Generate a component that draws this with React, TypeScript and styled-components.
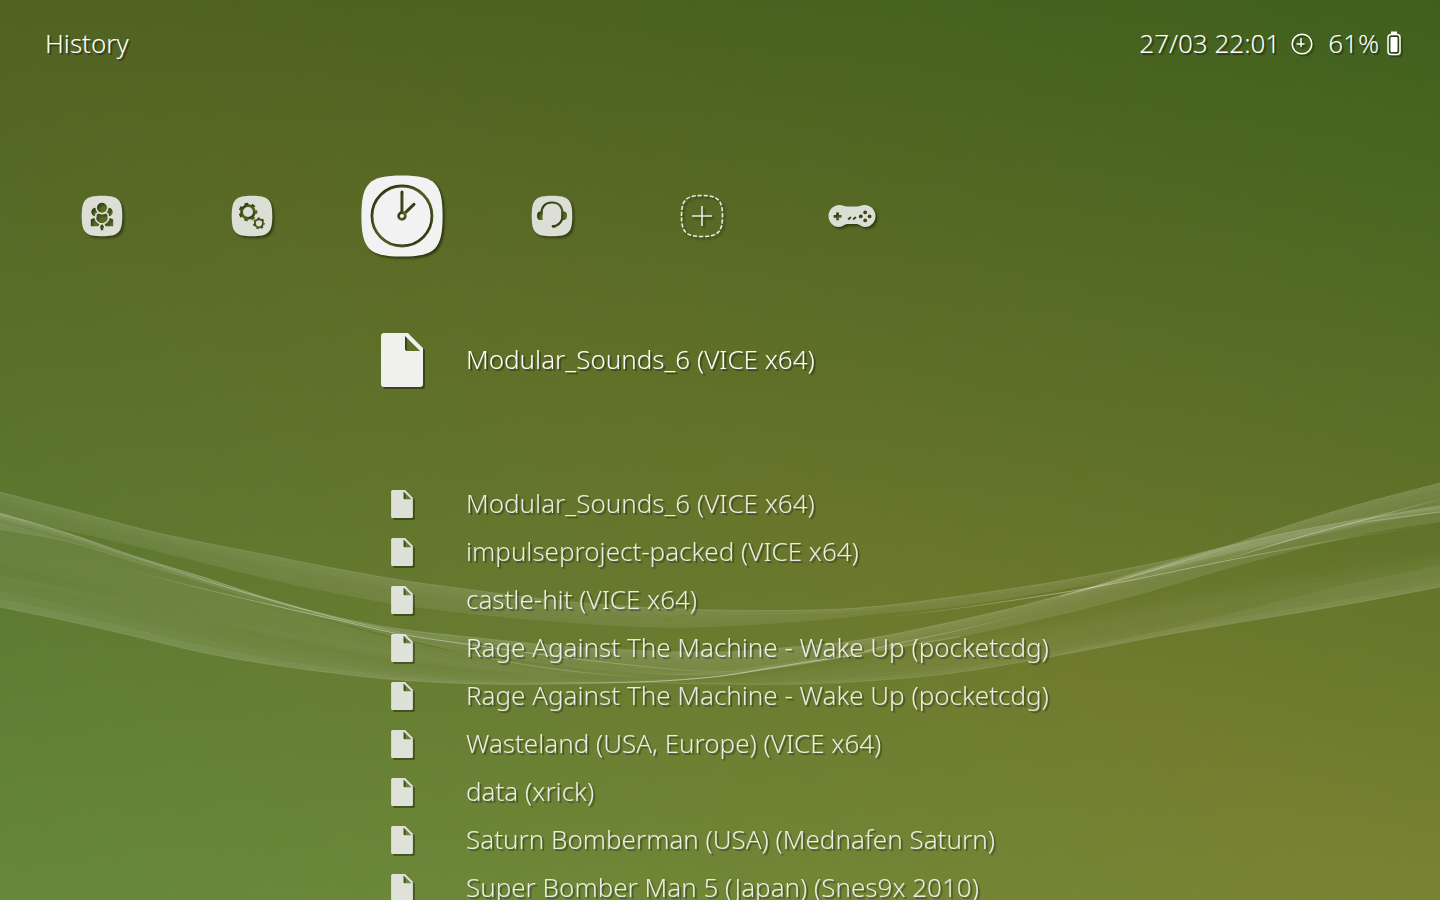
import React, { useState } from "react";
import styled, { createGlobalStyle, css } from "styled-components";

const GlobalStyle = createGlobalStyle`
  *, *::before, *::after { box-sizing: border-box; }
  body {
    margin: 0;
    font-family: "Noto Sans", "Open Sans", sans-serif;
    font-size: 26px;
    font-weight: 300;
    line-height: 46px;
    color: #fff;
    background: #5f7429;
  }
`;

const Screen = styled.div`
  position: relative;
  height: 100vh;
  overflow: hidden;
  background:
    linear-gradient(to bottom right, rgba(0, 36, 0, 0.34), rgba(0, 36, 0, 0)),
    linear-gradient(to top right, rgb(122, 157, 70), rgb(122, 131, 50) 50%, rgb(76, 108, 35));
`;

const Backdrop = styled.svg`
  position: absolute;
  inset: 0;
  width: 100%;
  height: 100%;
`;

const Content = styled.div`
  position: relative;
`;

const Header = styled.header`
  display: flex;
  justify-content: space-between;
  align-items: center;
  padding: 20px 39px 2px 45px;
  text-shadow: 2px 2px 1px rgba(0, 0, 0, 0.4);
`;

const Title = styled.h1`
  margin: 0;
  font-size: inherit;
  font-weight: inherit;
`;

const Status = styled.div`
  display: flex;
  align-items: center;
  gap: 8px;
`;

const StatusIcon = styled.svg<{ $width: number }>`
  width: ${(p) => p.$width}px;
  height: 24px;
  overflow: visible;
  filter: drop-shadow(2px 2px 0 rgba(0, 0, 0, 0.3));
`;

const Clock = styled.span`
  display: flex;
  align-items: center;
  gap: 10px;
  margin-right: 6px;
`;

const resetButton = css`
  border: 0;
  padding: 0;
  background: none;
  color: inherit;
  font: inherit;
  text-align: left;
  cursor: pointer;
`;

const Categories = styled.nav`
  display: flex;
  padding: 84px 0 0 27px;
`;

const Category = styled.button`
  ${resetButton}
  width: 150px;
  height: 128px;
  display: grid;
  place-items: center;
`;

const CategoryIcon = styled.svg<{ $active: boolean }>`
  width: ${(p) => (p.$active ? 128 : 64)}px;
  height: ${(p) => (p.$active ? 128 : 64)}px;
  overflow: visible;
  opacity: ${(p) => (p.$active ? 1 : 0.86)};
  filter: drop-shadow(2px 2px 1px rgba(0, 0, 0, 0.5));
`;

const List = styled.ul`
  list-style: none;
  margin: 0;
  padding: 56px 0 0 366px;
`;

const Row = styled.li<{ $active: boolean }>`
  margin-bottom: ${(p) => (p.$active ? 96 : 0)}px;
`;

const Entry = styled.button<{ $active: boolean }>`
  ${resetButton}
  display: grid;
  grid-template: 48px / 72px auto;
  column-gap: 28px;
  align-items: center;
  white-space: nowrap;
  opacity: ${(p) => (p.$active ? 0.99 : 0.86)};
  text-shadow: 2px 2px 1px rgba(0, 0, 0, 0.4);
`;

const EntryLabel = styled.span`
  align-self: start;
`;

const FileIcon = styled.svg<{ $active: boolean }>`
  justify-self: center;
  width: ${(p) => (p.$active ? 42 : 22)}px;
  height: ${(p) => (p.$active ? 54 : 28)}px;
  overflow: visible;
  filter: drop-shadow(2px 2px 0 rgba(0, 0, 0, 0.4));
`;

type Point = [number, number];

/** Smooth cubic segments through every point, the first one excluded. */
function segments(p: Point[]): string {
  let d = "";
  for (let i = 0; i < p.length - 1; i++) {
    const a = p[i - 1] ?? p[i];
    const b = p[i];
    const c = p[i + 1];
    const e = p[i + 2] ?? c;
    d += `C${b[0] + (c[0] - a[0]) / 6} ${b[1] + (c[1] - a[1]) / 6} ${c[0] - (e[0] - b[0]) / 6} ${c[1] - (e[1] - b[1]) / 6} ${c[0]} ${c[1]}`;
  }
  return d;
}

const curve = (p: Point[]) => `M${p[0][0]} ${p[0][1]}${segments(p)}`;

function area(top: Point[], bottom: Point[]): string {
  const back = [...bottom].reverse();
  return `${curve(top)}L${back[0][0]} ${back[0][1]}${segments(back)}Z`;
}

/** Height of a point list at x. */
function at(p: Point[], x: number): number {
  for (let i = 0; i < p.length - 1; i++) {
    if (x <= p[i + 1][0]) {
      const t = (x - p[i][0]) / (p[i + 1][0] - p[i][0]);
      return p[i][1] + t * (p[i + 1][1] - p[i][1]);
    }
  }
  return p[p.length - 1][1];
}

interface RibbonProps {
  top: Point[];
  bottom: Point[];
  shades: number[];
}

/** A translucent band whose opacity runs through the shades from top to bottom. */
function Ribbon({ top, bottom, shades }: RibbonProps) {
  const mix = (t: number): Point[] =>
    top.map(([x, y]) => [x, y + (at(bottom, x) - y) * t]);
  return (
    <>
      {shades.map((alpha, i) => (
        <path
          key={i}
          d={area(mix(i / shades.length), mix((i + 1) / shades.length))}
          fill="#fff"
          fillOpacity={alpha}
        />
      ))}
    </>
  );
}

const crest: Point[] = [
  [0, 492], [100, 518], [167, 535], [267, 555], [333, 568], [400, 580], [480, 591], [560, 601],
  [640, 607], [713, 610], [813, 610], [880, 606], [960, 596], [1060, 581], [1160, 562],
  [1220, 548], [1290, 532], [1380, 516], [1440, 506],
];
const crestUnder: Point[] = [
  [0, 516], [100, 538], [200, 562], [300, 587], [400, 605], [480, 615], [560, 622], [640, 627],
  [713, 627], [800, 622], [880, 614], [960, 606], [1060, 590], [1160, 570], [1220, 556],
  [1290, 541], [1380, 522], [1440, 512],
];
const middle: Point[] = [
  [0, 513], [67, 533], [133, 556], [200, 576], [267, 598], [333, 616], [400, 629], [480, 638],
  [560, 646], [650, 651], [720, 652], [780, 648], [860, 640], [960, 620], [1060, 596],
  [1127, 576], [1193, 556], [1227, 546], [1293, 524], [1360, 504], [1440, 483],
];
const middleUnder: Point[] = [
  [0, 530], [67, 542], [133, 562], [200, 582], [267, 603], [333, 621], [400, 638], [480, 654],
  [560, 666], [650, 674], [720, 675], [780, 668], [860, 655], [960, 637], [1060, 615],
  [1127, 598], [1193, 579], [1227, 569], [1293, 551], [1360, 535], [1440, 522],
];
const base: Point[] = [
  [0, 607], [67, 621], [133, 636], [200, 652], [267, 664], [333, 673], [400, 680], [480, 684],
  [560, 684], [640, 682], [713, 677], [770, 669], [813, 662], [860, 653], [960, 637],
];
const baseTop: Point[] = [
  [0, 522], [67, 540], [133, 560], [200, 580], [267, 602], [333, 622], [400, 640], [480, 656],
  [560, 666], [640, 673], [713, 672], [770, 665], [813, 658], [860, 650], [960, 636],
];
const tail: Point[] = [
  [640, 682], [713, 684], [800, 684], [880, 680], [960, 672], [1060, 655], [1160, 636],
  [1200, 629], [1290, 614], [1360, 602], [1440, 587],
];
const tailTop: Point[] = [
  [640, 681], [713, 677], [800, 664], [880, 650], [960, 636], [1060, 614], [1160, 592],
  [1200, 584], [1290, 570], [1360, 560], [1440, 548],
];
const tailFold: Point[] = [
  [1060, 653], [1160, 631], [1240, 611], [1340, 586], [1440, 565],
];
const tailFoldUnder: Point[] = [
  [1060, 655], [1160, 636], [1240, 622], [1340, 606], [1440, 587],
];
const innerFold: Point[] = [
  [0, 575], [100, 590], [200, 612], [300, 632], [400, 648], [480, 660], [560, 672],
];
const innerFoldUnder: Point[] = [
  [0, 583], [100, 602], [200, 625], [300, 643], [400, 661], [480, 672], [560, 682],
];
const glow: Point[] = [
  [0, 513], [67, 532], [133, 555], [200, 576], [267, 598], [333, 617], [400, 632],
];
const glowUnder: Point[] = [
  [0, 521], [67, 539], [133, 560], [200, 580], [267, 601], [333, 619], [400, 633],
];
const crossing: Point[] = [
  [1060, 594], [1127, 574], [1193, 555], [1240, 543], [1300, 530], [1380, 514], [1440, 505],
];
const crossingUnder: Point[] = [
  [1060, 598], [1127, 581], [1193, 565], [1240, 554], [1300, 539], [1380, 520], [1440, 511],
];
const threads: { points: Point[]; alpha: number }[] = [
  { alpha: 0.4, points: [[120, 568], [200, 588], [267, 604], [333, 619], [400, 634], [480, 646], [560, 657], [640, 666], [700, 671], [760, 671]] },
  { alpha: 0.32, points: [[120, 552], [200, 579], [267, 599], [333, 617], [400, 632], [460, 641]] },
  { alpha: 0.2, points: [[400, 637], [480, 656], [540, 667], [600, 674], [660, 679]] },
  { alpha: 0.42, points: [[520, 684], [557, 683], [640, 682], [713, 677], [770, 668], [813, 661], [847, 656], [890, 645], [960, 630], [1040, 610]] },
  { alpha: 0.36, points: [[880, 618], [960, 608], [1060, 593], [1127, 581], [1210, 564], [1293, 548], [1360, 536], [1430, 526]] },
  { alpha: 0.3, points: [[1020, 604], [1060, 596], [1127, 578], [1193, 558], [1260, 540]] },
  { alpha: 0.36, points: [[1200, 565], [1240, 555], [1300, 537], [1360, 521], [1400, 510], [1460, 494]] },
  { alpha: 0.3, points: [[1340, 526], [1380, 520], [1440, 512], [1500, 504]] },
];

function Waves() {
  return (
    <Backdrop viewBox="0 0 1440 900" preserveAspectRatio="none" aria-hidden="true">
      <linearGradient id="thread">
        <stop offset="0" stopColor="#fff" stopOpacity="0" />
        <stop offset="0.3" stopColor="#fff" />
        <stop offset="0.6" stopColor="#fff" />
        <stop offset="1" stopColor="#fff" stopOpacity="0" />
      </linearGradient>
      <Ribbon top={crest} bottom={crestUnder} shades={[0.13, 0.12, 0.1, 0.09, 0.09, 0.08]} />
      <Ribbon top={middle} bottom={middleUnder} shades={[0.16, 0.14, 0.12, 0.11, 0.1, 0.1]} />
      <Ribbon top={glow} bottom={glowUnder} shades={[0.12, 0.09, 0.05]} />
      <Ribbon top={crossing} bottom={crossingUnder} shades={[0.06, 0.1, 0.06]} />
      <Ribbon top={baseTop} bottom={base} shades={[0.07, 0.08, 0.08, 0.08, 0.07, 0.06, 0.07, 0.08, 0.1, 0.14]} />
      <Ribbon top={innerFold} bottom={innerFoldUnder} shades={[0.01, 0.02, 0.03, 0.02, 0.01]} />
      <Ribbon top={tailTop} bottom={tail} shades={[0.01, 0.02, 0.04, 0.05, 0.06, 0.06, 0.07, 0.1]} />
      <Ribbon top={tailFold} bottom={tailFoldUnder} shades={[0.05, 0.05, 0.06]} />
      <g fill="none" stroke="#fff">
        {[crest, middle, base, tail].map((line, i) => (
          <path key={i} d={curve(line)} strokeOpacity={0.12} />
        ))}
      </g>
      <g fill="none" stroke="url(#thread)">
        {threads.map((t, i) => (
          <path key={i} d={curve(t.points)} strokeOpacity={t.alpha} />
        ))}
      </g>
    </Backdrop>
  );
}

interface TileProps {
  id: string;
  children: React.ReactNode;
}

/** White rounded tile with its symbol cut out of it. */
function Tile({ id, children }: TileProps) {
  return (
    <>
      <mask id={id} maskUnits="userSpaceOnUse" x="0" y="0" width="64" height="64">
        <rect width="64" height="64" fill="#fff" />
        {children}
      </mask>
      <path
        mask={`url(#${id})`}
        fill="#f2f2f2"
        d="M11.700 32C11.700 15.500 15.500 11.700 32 11.700S52.300 15.500 52.300 32 48.500 52.300 32 52.300 11.700 48.500 11.700 32Z"
      />
    </>
  );
}

const MainMenuIcon = () => (
  <Tile id="tile-main">
    <circle cx="25.500" cy="28" r="4.200" />
    <circle cx="38.500" cy="28" r="4.200" />
    <path d="M20.800 42.300V35.500L24 34 32 40 40 34 43.200 35.500V42.300Z" />
    <path d="M26 30C28 28 36 28 38 30L38.500 35C38 38 34 40 32 40S26 38 25.500 35Z" stroke="#fff" strokeWidth="1.600" />
    <circle cx="32" cy="23.800" r="5.800" stroke="#fff" strokeWidth="1.600" />
    <path d="M28 43L29.800 39.600H34.200L36 43Z" fill="#fff" />
    <path d="M32 40L34 42.500 33 46.300H31L30 42.500Z" />
  </Tile>
);

const SettingsIcon = () => (
  <Tile id="tile-settings">
    <g fill="none" stroke="#000">
      <circle cx="28" cy="28" r="6.400" strokeWidth="2.800" />
      <circle cx="28" cy="28" r="8" strokeWidth="2.600" strokeDasharray="3.600 3.581" strokeDashoffset="1.800" />
      <circle cx="39" cy="39.300" r="4" strokeWidth="1.800" />
      <circle cx="39" cy="39.300" r="5" strokeWidth="1.800" strokeDasharray="2.300 2.188" strokeDashoffset="1" />
    </g>
  </Tile>
);

const HistoryIcon = () => (
  <Tile id="tile-history">
    <g fill="none" stroke="#000" strokeLinecap="round">
      <circle cx="32" cy="32" r="15" strokeWidth="1.400" />
      <circle cx="32" cy="32" r="1.700" strokeWidth="1.300" />
      <path d="M32 30.200V20M33.300 30.700L38 26.200" strokeWidth="1.500" />
    </g>
  </Tile>
);

const NetplayIcon = () => (
  <Tile id="tile-netplay">
    <path
      d="M21.500 31C21 23 25 18.500 32 18.500S43 23 42.500 31C43 37 40 40 35.500 42"
      fill="none"
      stroke="#000"
      strokeWidth="2.200"
    />
    <path d="M22.500 27.500V36H20C18 36 17 34.500 17 31.800S18 27.500 20 27.500ZM41.500 27.500V36H44C46 36 47 34.500 47 31.800S46 27.500 44 27.500Z" />
    <ellipse cx="34" cy="42.300" rx="2.500" ry="1.500" />
  </Tile>
);

const AddIcon = () => (
  <g fill="none" stroke="#fff">
    <path
      d="M11.500 32C11.500 16 16 11.500 32 11.500S52.500 16 52.500 32 48 52.500 32 52.500 11.500 48 11.500 32Z"
      strokeWidth="1.600"
      strokeDasharray="4.200 1.800"
    />
    <path d="M32 22V42M22 32H42" strokeWidth="1.600" />
  </g>
);

const GamepadIcon = () => (
  <>
    <mask id="pad" maskUnits="userSpaceOnUse" x="0" y="0" width="64" height="64">
      <rect width="64" height="64" fill="#fff" />
      <path d="M16.200 28.500H19V31H21.500V33.800H19V36.300H16.200V33.800H13.700V31H16.200Z" />
      <circle cx="45.200" cy="28.400" r="1.900" />
      <circle cx="45.200" cy="36.400" r="1.900" />
      <circle cx="40.800" cy="32.400" r="1.900" />
      <circle cx="49.600" cy="32.400" r="1.900" />
      <path d="M28.600 35L30.400 33.500M33.600 35L35.400 33.500" stroke="#000" strokeWidth="1.800" strokeLinecap="round" />
    </mask>
    <path
      mask="url(#pad)"
      fill="#f2f2f2"
      d="M19.500 21C23 21 24 22.500 27 22.500H37C40 22.500 41 21 44.500 21C51 21 55.500 26 55.500 32S51 43 45 43C41 43 40 40 36.500 40H27.500C24 40 23 43 19 43C13 43 8.500 38 8.500 32S13 21 19.500 21Z"
    />
  </>
);

const categories = [
  { name: "Main Menu", Icon: MainMenuIcon },
  { name: "Settings", Icon: SettingsIcon },
  { name: "History", Icon: HistoryIcon },
  { name: "Netplay", Icon: NetplayIcon },
  { name: "Import Content", Icon: AddIcon },
  { name: "Games", Icon: GamepadIcon },
];

const entries = [
  "Modular_Sounds_6 (VICE x64)",
  "Modular_Sounds_6 (VICE x64)",
  "impulseproject-packed (VICE x64)",
  "castle-hit (VICE x64)",
  "Rage Against The Machine - Wake Up (pocketcdg)",
  "Rage Against The Machine - Wake Up (pocketcdg)",
  "Wasteland (USA, Europe) (VICE x64)",
  "data (xrick)",
  "Saturn Bomberman (USA) (Mednafen Saturn)",
  "Super Bomber Man 5 (Japan) (Snes9x 2010)",
];

export default function App() {
  const [category, setCategory] = useState(2);
  const [selected, setSelected] = useState(0);

  return (
    <Screen>
      <GlobalStyle />
      <Waves />
      <Content>
        <Header>
          <Title>{categories[category].name}</Title>
          <Status>
            <Clock>
              <time>27/03 22:01</time>
              <StatusIcon $width={24} viewBox="0 0 24 24" fill="none" stroke="#fff" aria-hidden="true">
                <circle cx="12" cy="13" r="9.800" strokeWidth="1.500" />
                <path d="M11 7V16M6.500 13H14.500" strokeWidth="1.400" />
              </StatusIcon>
            </Clock>
            <span>61%</span>
            <StatusIcon $width={14} viewBox="0 0 14 24" aria-hidden="true">
              <path d="M4 0.500H10V3H4Z" fill="#fff" />
              <rect x="1" y="3.500" width="12" height="20" rx="3" fill="none" stroke="#fff" strokeWidth="1.500" />
              <rect x="3.500" y="6" width="7" height="15" rx="1" fill="#fff" />
            </StatusIcon>
          </Status>
        </Header>
        <Categories aria-label="Categories">
          {categories.map(({ name, Icon }, i) => (
            <Category key={name} type="button" aria-label={name} onClick={() => setCategory(i)}>
              <CategoryIcon $active={i === category} viewBox="0 0 64 64" aria-hidden="true">
                <Icon />
              </CategoryIcon>
            </Category>
          ))}
        </Categories>
        <List>
          {entries.map((label, i) => (
            <Row key={i} $active={i === selected}>
              <Entry type="button" $active={i === selected} onClick={() => setSelected(i)}>
                <FileIcon $active={i === selected} viewBox="0 0 42 54" fill="#f2f2f2" aria-hidden="true">
                  <path
                    fillRule="evenodd"
                    d="M3 0H27L42 15V51Q42 54 39 54H3Q0 54 0 51V3Q0 0 3 0ZM24 3V16Q24 18 26 18H39Z"
                  />
                </FileIcon>
                <EntryLabel>{label}</EntryLabel>
              </Entry>
            </Row>
          ))}
        </List>
      </Content>
    </Screen>
  );
}
